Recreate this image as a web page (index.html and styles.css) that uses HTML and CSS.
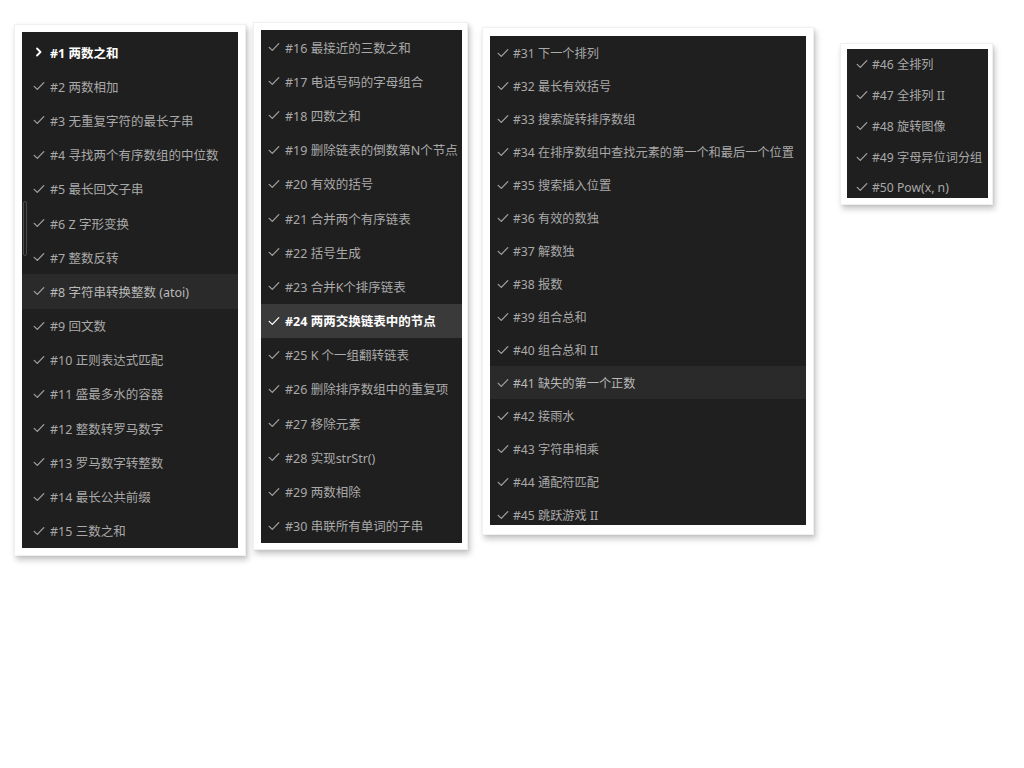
FILE: index.html
```html
<!DOCTYPE html>
<html lang="zh-CN">
<head>
<meta charset="utf-8">
<title>LeetCode 题目列表</title>
<link rel="stylesheet" href="styles.css">
</head>
<body>
<svg width="0" height="0" class="defs" aria-hidden="true">
  <symbol id="chk" viewBox="0 0 12 10"><path d="M1.2 5.4 L4.3 8.4 L10.8 1.6" fill="none" stroke="currentColor" stroke-width="1.3" stroke-linecap="round" stroke-linejoin="round"/></symbol>
  <symbol id="chev" viewBox="0 0 12 10"><path d="M4 1.5 L7.5 5 L4 8.5" fill="none" stroke="currentColor" stroke-width="1.8" stroke-linecap="round" stroke-linejoin="round"/></symbol>
</svg>
<div class="desk">
  <section class="card c1">
    <ul class="list l1">
      <li class="row cur"><svg class="ic"><use href="#chev"/></svg><span>#1 两数之和</span></li>
      <li class="row"><svg class="ic"><use href="#chk"/></svg><span>#2 两数相加</span></li>
      <li class="row"><svg class="ic"><use href="#chk"/></svg><span>#3 无重复字符的最长子串</span></li>
      <li class="row"><svg class="ic"><use href="#chk"/></svg><span>#4 寻找两个有序数组的中位数</span></li>
      <li class="row"><svg class="ic"><use href="#chk"/></svg><span>#5 最长回文子串</span></li>
      <li class="row"><svg class="ic"><use href="#chk"/></svg><span>#6 Z 字形变换</span></li>
      <li class="row"><svg class="ic"><use href="#chk"/></svg><span>#7 整数反转</span></li>
      <li class="row hov"><svg class="ic"><use href="#chk"/></svg><span>#8 字符串转换整数 (atoi)</span></li>
      <li class="row"><svg class="ic"><use href="#chk"/></svg><span>#9 回文数</span></li>
      <li class="row"><svg class="ic"><use href="#chk"/></svg><span>#10 正则表达式匹配</span></li>
      <li class="row"><svg class="ic"><use href="#chk"/></svg><span>#11 盛最多水的容器</span></li>
      <li class="row"><svg class="ic"><use href="#chk"/></svg><span>#12 整数转罗马数字</span></li>
      <li class="row"><svg class="ic"><use href="#chk"/></svg><span>#13 罗马数字转整数</span></li>
      <li class="row"><svg class="ic"><use href="#chk"/></svg><span>#14 最长公共前缀</span></li>
      <li class="row"><svg class="ic"><use href="#chk"/></svg><span>#15 三数之和</span></li>
    </ul>
    <div class="sash"></div>
  </section>
  <section class="card c2">
    <ul class="list l2">
      <li class="row"><svg class="ic"><use href="#chk"/></svg><span>#16 最接近的三数之和</span></li>
      <li class="row"><svg class="ic"><use href="#chk"/></svg><span>#17 电话号码的字母组合</span></li>
      <li class="row"><svg class="ic"><use href="#chk"/></svg><span>#18 四数之和</span></li>
      <li class="row"><svg class="ic"><use href="#chk"/></svg><span>#19 删除链表的倒数第N个节点</span></li>
      <li class="row"><svg class="ic"><use href="#chk"/></svg><span>#20 有效的括号</span></li>
      <li class="row"><svg class="ic"><use href="#chk"/></svg><span>#21 合并两个有序链表</span></li>
      <li class="row"><svg class="ic"><use href="#chk"/></svg><span>#22 括号生成</span></li>
      <li class="row"><svg class="ic"><use href="#chk"/></svg><span>#23 合并K个排序链表</span></li>
      <li class="row sel"><svg class="ic"><use href="#chk"/></svg><span>#24 两两交换链表中的节点</span></li>
      <li class="row"><svg class="ic"><use href="#chk"/></svg><span>#25 K 个一组翻转链表</span></li>
      <li class="row"><svg class="ic"><use href="#chk"/></svg><span>#26 删除排序数组中的重复项</span></li>
      <li class="row"><svg class="ic"><use href="#chk"/></svg><span>#27 移除元素</span></li>
      <li class="row"><svg class="ic"><use href="#chk"/></svg><span>#28 实现strStr()</span></li>
      <li class="row"><svg class="ic"><use href="#chk"/></svg><span>#29 两数相除</span></li>
      <li class="row"><svg class="ic"><use href="#chk"/></svg><span>#30 串联所有单词的子串</span></li>
    </ul>
  </section>
  <section class="card c3">
    <ul class="list l3">
      <li class="row"><svg class="ic"><use href="#chk"/></svg><span>#31 下一个排列</span></li>
      <li class="row"><svg class="ic"><use href="#chk"/></svg><span>#32 最长有效括号</span></li>
      <li class="row"><svg class="ic"><use href="#chk"/></svg><span>#33 搜索旋转排序数组</span></li>
      <li class="row"><svg class="ic"><use href="#chk"/></svg><span>#34 在排序数组中查找元素的第一个和最后一个位置</span></li>
      <li class="row"><svg class="ic"><use href="#chk"/></svg><span>#35 搜索插入位置</span></li>
      <li class="row"><svg class="ic"><use href="#chk"/></svg><span>#36 有效的数独</span></li>
      <li class="row"><svg class="ic"><use href="#chk"/></svg><span>#37 解数独</span></li>
      <li class="row"><svg class="ic"><use href="#chk"/></svg><span>#38 报数</span></li>
      <li class="row"><svg class="ic"><use href="#chk"/></svg><span>#39 组合总和</span></li>
      <li class="row"><svg class="ic"><use href="#chk"/></svg><span>#40 组合总和 II</span></li>
      <li class="row hov"><svg class="ic"><use href="#chk"/></svg><span>#41 缺失的第一个正数</span></li>
      <li class="row"><svg class="ic"><use href="#chk"/></svg><span>#42 接雨水</span></li>
      <li class="row"><svg class="ic"><use href="#chk"/></svg><span>#43 字符串相乘</span></li>
      <li class="row"><svg class="ic"><use href="#chk"/></svg><span>#44 通配符匹配</span></li>
      <li class="row"><svg class="ic"><use href="#chk"/></svg><span>#45 跳跃游戏 II</span></li>
    </ul>
  </section>
  <section class="card c4">
    <ul class="list l4">
      <li class="row"><svg class="ic"><use href="#chk"/></svg><span>#46 全排列</span></li>
      <li class="row"><svg class="ic"><use href="#chk"/></svg><span>#47 全排列 II</span></li>
      <li class="row"><svg class="ic"><use href="#chk"/></svg><span>#48 旋转图像</span></li>
      <li class="row"><svg class="ic"><use href="#chk"/></svg><span>#49 字母异位词分组</span></li>
      <li class="row"><svg class="ic"><use href="#chk"/></svg><span>#50 Pow(x, n)</span></li>
    </ul>
  </section>
</div>
</body>
</html>
```
FILE: styles.css
```css
html, body {
  margin: 0;
  padding: 0;
  background: #ffffff;
}

body {
  width: 1024px;
  height: 768px;
  overflow: hidden;
  font-family: "Noto Sans", "Noto Sans CJK SC", sans-serif;
}

.defs {
  position: absolute;
  width: 0;
  height: 0;
}

.desk {
  display: flex;
  align-items: flex-start;
  padding-left: 14px;
}

.card {
  position: relative;
  background: #ffffff;
  border: 1px solid #f0f0f0;
  box-shadow: 2px 4px 6px rgba(0, 0, 0, 0.22), 1px 1px 2px rgba(0, 0, 0, 0.06);
  box-sizing: border-box;
}

.c1 {
  margin-top: 24px;
  padding: 7px 7px 7px 7px;
}

.c2 {
  margin-left: 7px;
  margin-top: 22px;
  padding: 7px 5px 6px 7px;
}

.c3 {
  margin-left: 14px;
  margin-top: 27px;
  padding: 8px 7px 9px 7px;
}

.c4 {
  margin-left: 26px;
  margin-top: 43px;
  padding: 5px 4px 6px 6px;
}

.list {
  list-style: none;
  margin: 0;
  padding: 0;
  background: #1f1f1f;
  overflow: hidden;
  box-sizing: border-box;
}

.l1 { width: 216px; height: 516px; padding-top: 3px; }
.l2 { width: 201px; height: 513px; }
.l3 { width: 316px; height: 489px; }
.l4 { width: 141px; height: 149px; }

.row {
  display: flex;
  align-items: center;
  gap: 5px;
  font-size: 12.5px;
  color: #a9a9a9;
  white-space: nowrap;
}

.l1 .row { height: 34.2px; padding-left: 11px; }
.l2 .row { height: 34.2px; padding-left: 7px; }
.l3 .row { height: 33px; padding-left: 7px; font-size: 12.2px; gap: 4px; }
.l4 .row { height: 30.75px; padding-left: 9px; font-size: 12.2px; gap: 4px; }

.ic {
  width: 12px;
  height: 10px;
  flex: none;
  color: #a0a0a0;
}

.row.cur {
  color: #ffffff;
  font-weight: 700;
}

.row.cur .ic {
  color: #ffffff;
}

.row.hov {
  background: #2a2a2a;
  color: #b9b9b9;
}

.row.sel {
  background: #3a3a3a;
  color: #ffffff;
  font-weight: 700;
}

.row.sel .ic {
  color: #ffffff;
}

.sash {
  position: absolute;
  left: 8px;
  top: 176px;
  width: 2px;
  height: 53px;
  border: 1px solid #4b4b4b;
  border-radius: 2px;
}
```
